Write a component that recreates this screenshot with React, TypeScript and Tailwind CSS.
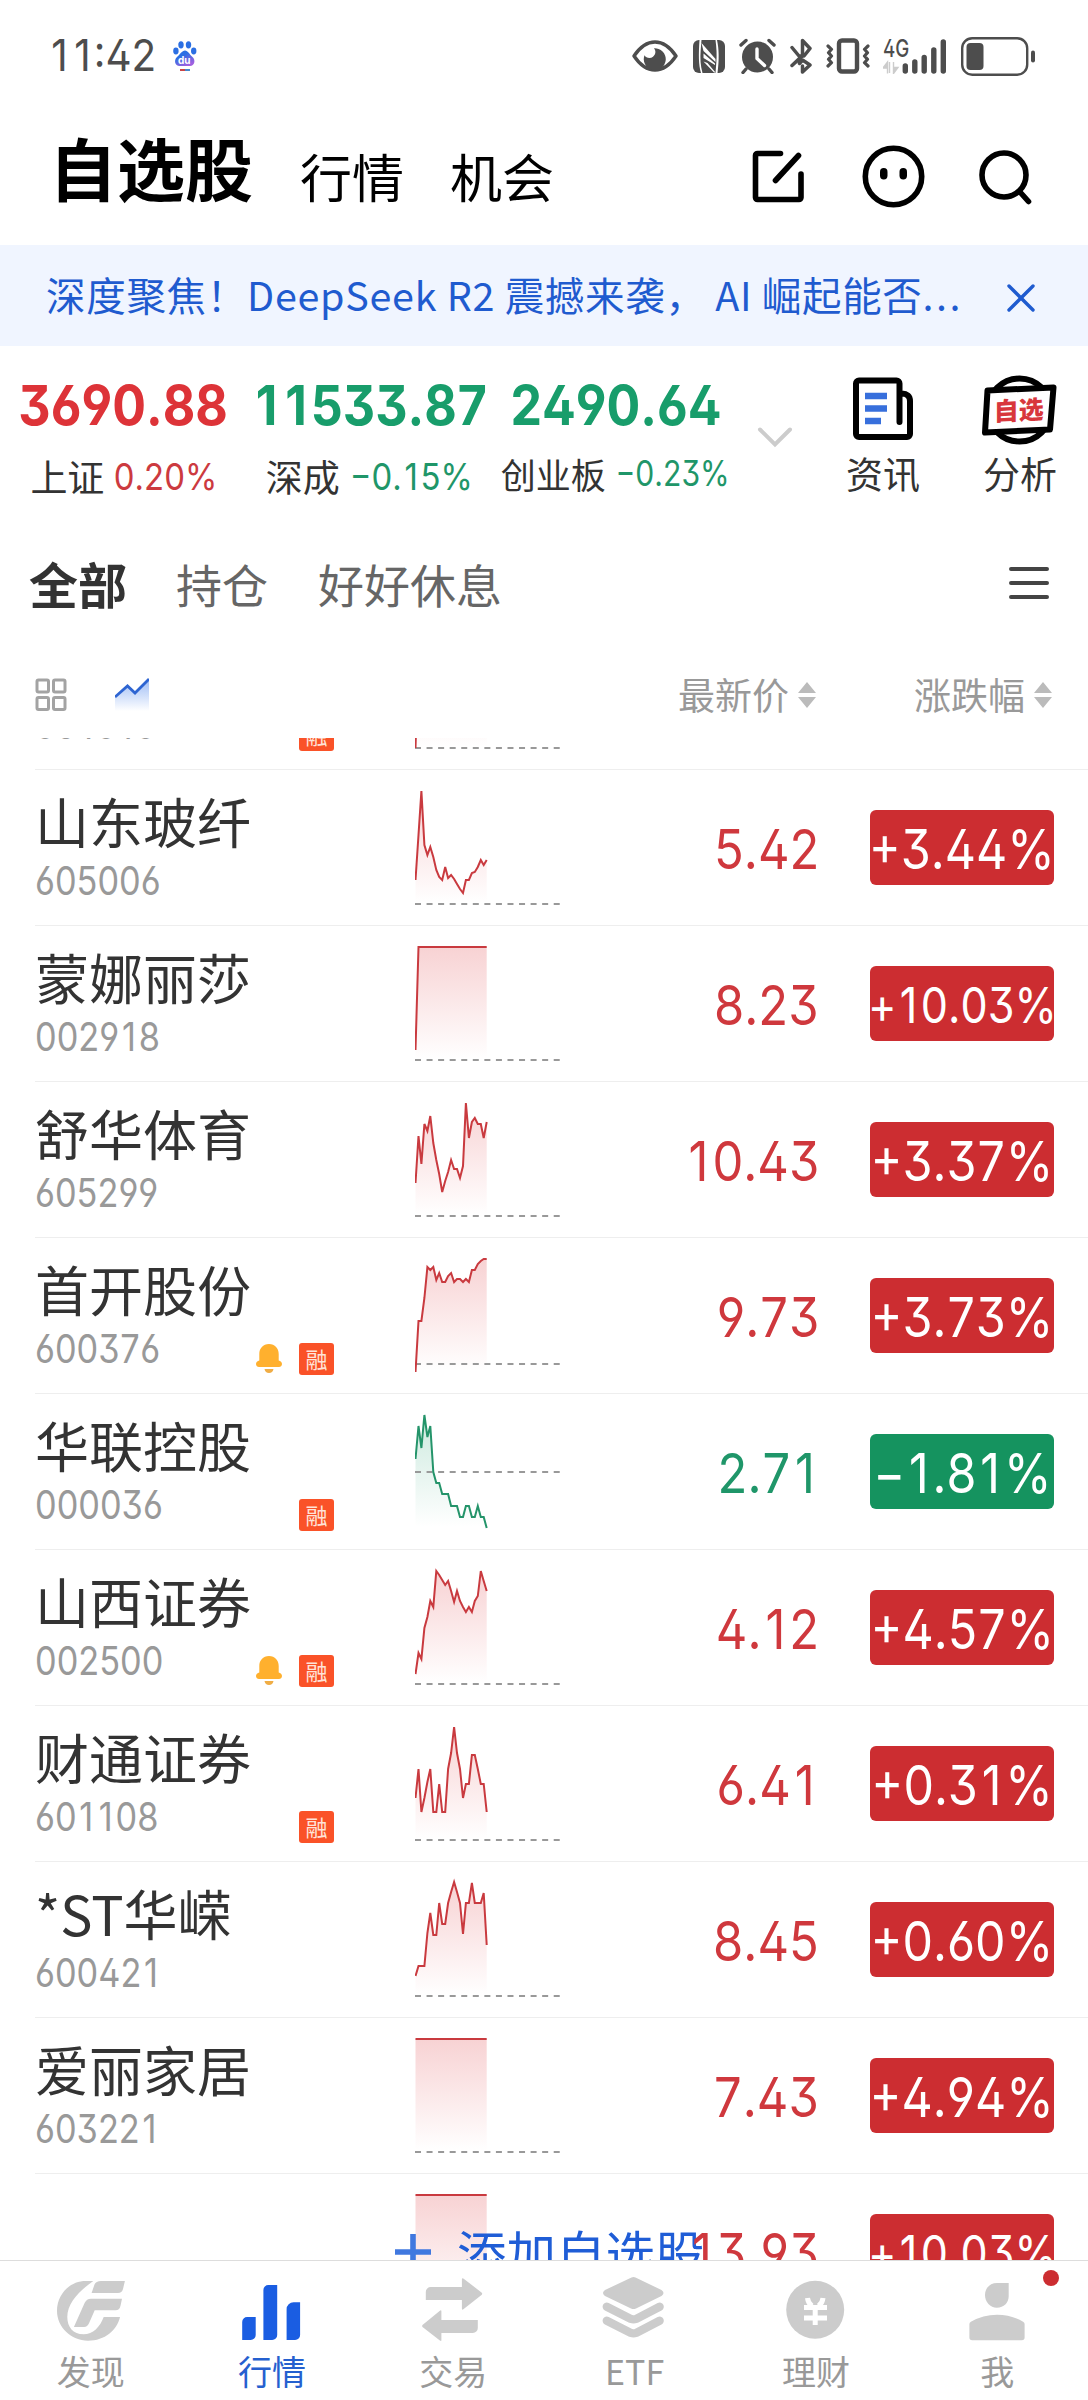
import clsx from 'clsx';
import { X } from 'lucide-react';

interface Stock {
  name?: string
  code?: string
  price?: string
  change?: string
  points: number[]
  base?: number
  bell?: boolean
  margin?: boolean
  addButton?: boolean
}

const flat = (y: number, count = 25) => Array.from({ length: count }, () => y);

const stocks: Stock[] = [
  { code: '601616', margin: true, points: [135, 40, 36, ...flat(30, 22)] },
  {
    name: '山东玻纤', code: '605006', price: '5.42', change: '+3.44%',
    points: [111, 66, 22, 76, 86, 78, 88, 101, 108, 111, 98, 109, 106, 110, 115, 120, 124, 111, 111, 104, 103, 98, 91, 96, 91],
  },
  { name: '蒙娜丽莎', code: '002918', price: '8.23', change: '+10.03%', points: [125, ...flat(22, 24)] },
  {
    name: '舒华体育', code: '605299', price: '10.43', change: '+3.37%',
    points: [102, 55, 83, 43, 50, 35, 62, 79, 93, 111, 100, 91, 79, 88, 88, 97, 85, 22, 57, 41, 37, 43, 43, 57, 41],
  },
  {
    name: '首开股份', code: '600376', price: '9.73', change: '+3.73%', bell: true, margin: true, base: 127,
    points: [135, 84, 84, 61, 30, 33, 30, 43, 36, 45, 45, 39, 36, 45, 42, 42, 45, 42, 45, 33, 33, 27, 24, 22, 22],
  },
  {
    name: '华联控股', code: '000036', price: '2.71', change: '−1.81%', margin: true, base: 79,
    points: [66, 33, 55, 22, 44, 33, 79, 90, 90, 101, 101, 101, 113, 113, 113, 124, 124, 113, 113, 124, 124, 113, 124, 124, 135],
  },
  {
    name: '山西证券', code: '002500', price: '4.12', change: '+4.57%', bell: true, margin: true,
    points: [125, 104, 110, 79, 68, 52, 58, 22, 26, 31, 36, 32, 42, 53, 42, 52, 58, 63, 58, 63, 52, 47, 22, 32, 42],
  },
  {
    name: '财通证券', code: '601108', price: '6.41', change: '+0.31%', margin: true,
    points: [93, 64, 107, 93, 77, 64, 107, 107, 79, 107, 107, 64, 48, 22, 48, 64, 93, 79, 79, 50, 50, 64, 79, 79, 107],
  },
  {
    name: '*ST华嵘', code: '600421', price: '8.45', change: '+0.60%',
    points: [115, 105, 105, 105, 72, 52, 74, 74, 42, 63, 63, 42, 31, 21, 31, 42, 73, 42, 42, 22, 42, 42, 42, 32, 84],
  },
  { name: '爱丽家居', code: '603221', price: '7.43', change: '+4.94%', points: flat(22) },
  { price: '13.93', change: '+10.03%', points: flat(22), addButton: true },
];

// "1" and "7" are padded to the width of the other digits, so that columns line up.
function Num({ className, children }: { className?: string, children: string }) {
  return (
    <span
      className={clsx(
        "inline-block whitespace-nowrap font-['Inter'] [font-feature-settings:'ss01','cv02','cv03','cv04'] [font-kerning:none]",
        className,
      )}
    >
      {children.split(/([17])/).map((part, i) =>
        i % 2 ? <span key={i} className={part === '1' ? 'px-[0.08em]' : 'px-[0.02em]'}>{part}</span> : part,
      )}
    </span>
  );
}

function StatusBar() {
  return (
    <div className="flex h-[112px] items-center pl-[48px] pr-[52px] text-[#4d4d4d]">
      <Num className="mr-[2px] w-[123px] origin-left scale-x-[0.93] text-[43.500px] leading-none">11:42</Num>
      <svg width="24" height="31" viewBox="0 0 24 31">
        <defs>
          <linearGradient id="paw" x1="0" y1="0" x2="0.6" y2="1">
            <stop offset="0.4" stopColor="#2b6fe3" />
            <stop offset="1" stopColor="#a060e0" />
          </linearGradient>
        </defs>
        <g fill="#2b6fe3">
          <ellipse cx="8" cy="3.8" rx="2.7" ry="3.6" />
          <ellipse cx="15.5" cy="3.8" rx="2.7" ry="3.6" />
          <ellipse cx="2.9" cy="10" rx="2.7" ry="3.4" />
          <ellipse cx="20.7" cy="10" rx="2.7" ry="3.4" />
        </g>
        <path d="M12 9.500c3 0 4.500 4 7.500 6.500 3.500 3 2 9-2.500 9H6.500c-4.500 0-6-6-2.500-9C7 13.500 9 9.500 12 9.500z" fill="url(#paw)" />
        <text x="5" y="22.500" fontFamily="Inter" fontWeight="700" fontSize="10" fill="#fff">du</text>
        <path d="M7 29h5" stroke="#c44" strokeWidth="2" />
        <path d="M12 29h5" stroke="#48c" strokeWidth="2" />
      </svg>
      <div className="ml-auto flex h-[40px] items-center">
        <svg className="mr-[15px]" width="46" height="32" viewBox="0 0 46 32">
          <path d="M2 16C8 7 15 2 23 2s15 5 21 14c-6 9-13 14-21 14S8 25 2 16z" fill="none" stroke="currentColor" strokeWidth="3.400" strokeLinejoin="round" />
          <path d="M22 8.200a11 11 0 1 1-9.500 7c1.500 3 6 3.500 8.500 1.500 3-2.500 3-6 1-8.500z" fill="currentColor" />
        </svg>
        <svg className="mr-[14px]" width="32" height="33" viewBox="0 0 32 33">
          <rect width="32" height="33" rx="6" fill="currentColor" />
          <g fill="#fff">
            <path d="M6.500 0h2l-.8 10C7 18 7.500 26 9.500 33H8C5.500 25 5.500 14 6.500 0zM22.500 0h1.500c2 9 2.300 19 .5 33h-2l.8-10c.7-8 .2-15-.8-23z" />
            <path d="M8.500 3l14 16v3L10.500 11zM10.500 13.500l11.500 10v1.500l-11.500-7zM10.500 21.500l4 1.500 8 9.500h-1.500z" />
          </g>
        </svg>
        <svg className="mr-[14px]" width="37" height="36" viewBox="0 0 37 36">
          <circle cx="18.500" cy="19" r="15.500" fill="currentColor" />
          <path d="M2 7l5-4.500M35 7l-5-4.500M7 31l-3 3.500M30 31l3 3.500" stroke="currentColor" strokeWidth="3.400" strokeLinecap="round" />
          <path d="M18 11v9.500l7.500 7" fill="none" stroke="#fff" strokeWidth="3.400" strokeLinecap="round" strokeLinejoin="round" />
        </svg>
        <svg className="mr-[14px]" width="22" height="36" viewBox="0 0 22 36">
          <path d="M2 9.500L9 18h5l6-7.500-7.500-8V18L2 27.500M12 18L2 27.500M9.500 25.500l3-3.500 7.500 5-7.500 7v-6" fill="none" stroke="currentColor" strokeWidth="3.500" strokeLinecap="round" strokeLinejoin="round" />
        </svg>
        <svg className="mr-[13px]" width="44" height="36" viewBox="0 0 44 36">
          <rect x="13" y="2.500" width="18" height="31" rx="3" fill="none" stroke="currentColor" strokeWidth="4.400" />
          <path d="M2 8l3.500 3.300L2.500 14.700 5.500 18 2.500 21.300l3 3.400L2 28M42 8l-3.500 3.300 3 3.400-3 3.300 3 3.300-3 3.400L42 28" fill="none" stroke="currentColor" strokeWidth="3.200" strokeLinecap="round" strokeLinejoin="round" />
        </svg>
        <div className="relative mr-[14px] h-[36px] w-[64px]">
          <Num className="absolute left-0 top-[-1px] origin-left scale-x-[0.78] text-[24px] font-medium leading-none">4G</Num>
          <svg width="64" height="36" viewBox="0 0 64 36">
            <path d="M0 30h4.500v5.500V24L0 30zM6.500 24v11M10.500 35.500V24v5.500H15l-4.500 6z" fill="#ccc" stroke="#ccc" strokeWidth="1.400" />
            <path d="M22.300 28v5M31.800 24v9M41.200 19.500V33M50.800 12v21M60.300 4v29" stroke="currentColor" strokeWidth="5.400" strokeLinecap="round" />
          </svg>
        </div>
        <svg width="75" height="39" viewBox="0 0 75 39">
          <rect x="1.200" y="1.200" width="65" height="36.500" rx="10" fill="none" stroke="currentColor" strokeWidth="2.400" />
          <rect x="5.500" y="6" width="17" height="27" rx="4" fill="currentColor" />
          <rect x="70" y="13.500" width="4" height="12" rx="2" fill="currentColor" />
        </svg>
      </div>
    </div>
  );
}

function Header() {
  return (
    <header className="flex h-[133px] items-start pl-[49px] text-black">
      <h1 className="mt-[21px] w-[251px] text-[68px] font-bold leading-[68px]">自选股</h1>
      <span className="mt-[37px] w-[150px] text-[52px] leading-[54px]">行情</span>
      <span className="mt-[37px] text-[52px] leading-[54px]">机会</span>
      <div className="ml-auto mt-[33px] flex pr-[55px]">
        <svg className="mt-[5px]" width="53" height="53" viewBox="0 0 53 53" fill="none" stroke="currentColor" strokeWidth="5.600" strokeLinecap="round" strokeLinejoin="round">
          <path d="M28.500 3.500H5.500a2 2 0 0 0-2 2v42a2 2 0 0 0 2 2H47a2 2 0 0 0 2-2V24M46.500 5.500L23.500 30.500" />
        </svg>
        <svg className="ml-[57px]" width="63" height="63" viewBox="0 0 63 63">
          <circle cx="31.500" cy="31.500" r="28.200" fill="none" stroke="currentColor" strokeWidth="5.600" />
          <rect x="18" y="23" width="7.500" height="11.500" rx="3.700" fill="currentColor" />
          <rect x="37.500" y="23" width="7.500" height="11.500" rx="3.700" fill="currentColor" />
        </svg>
        <svg className="ml-[54px] mt-[5px]" width="54" height="56" viewBox="0 0 54 56" fill="none" stroke="currentColor" strokeWidth="5.600" strokeLinecap="round">
          <circle cx="25" cy="25" r="22" />
          <path d="M41 42l8.500 9.500" />
        </svg>
      </div>
    </header>
  );
}

function Banner() {
  return (
    <div className="flex h-[101px] items-center bg-[#f0f5ff] pl-[46px] text-[#1f5bcf]">
      <p className="mb-[3px] w-[940px] whitespace-pre text-[39.500px] leading-none tracking-[0.7px]">
        深度聚焦！DeepSeek R2 震撼来袭， AI 崛起能否<span className="tracking-[2.500px]">...</span>
      </p>
      <X className="ml-[11px] mt-[4px]" size={48} strokeWidth={1.700} />
    </div>
  );
}

function Index({ className, value, label, change, up, small }: {
  className: string
  value: string
  label: string
  change: string
  up?: boolean
  small?: boolean
}) {
  return (
    <div className={clsx('flex flex-col items-center pt-[31px]', className)}>
      <Num className={clsx('scale-x-[0.91] text-[55px] font-bold leading-[56px]', up ? 'text-[#dd3338]' : 'text-[#189d6b]')}>
        {value}
      </Num>
      <div className={clsx('flex items-center whitespace-nowrap leading-none', small ? 'mt-[23px] pl-[4px] text-[35px]' : 'mt-[25px] pl-[2px] text-[37px]')}>
        <span className="text-[#333]">{label}</span>
        <Num
          className={clsx(
            'mr-[-14px] origin-left pl-[11px]',
            small ? 'scale-x-[0.86]' : 'scale-x-[0.89]',
            up ? 'text-[#cc3a3f]' : 'text-[#1f9669]',
          )}
        >
          {change}
        </Num>
      </div>
    </div>
  );
}

function Indices() {
  return (
    <section className="flex h-[180px]">
      <Index className="ml-[12px] w-[222px]" value="3690.88" label="上证" change="0.20%" up />
      <Index className="w-[271px]" value="11533.87" label="深成" change="−0.15%" />
      <Index className="w-[222px]" value="2490.64" label="创业板" change="−0.23%" small />
      <svg className="ml-[30px] mt-[80px]" width="36" height="24" viewBox="0 0 36 24" fill="none" stroke="#ccc" strokeWidth="4" strokeLinecap="round">
        <path d="M3 3.500l15 15 15-15" />
      </svg>
      <div className="ml-[53px] flex w-[74px] flex-col items-center pt-[31px] text-[37px] leading-none text-[#333]">
        <svg width="60" height="65" viewBox="0 0 60 65">
          <path d="M46.500 45V6.500a3 3 0 0 0-3-3H6a3 3 0 0 0-3 3V57a3 3 0 0 0 3 3h48a3 3 0 0 0 3-3V24c0-5-3-7.500-8-7.500" fill="none" stroke="#000" strokeWidth="6" strokeLinecap="round" />
          <path d="M12 19h22M12 31.500h22M12 44h16" stroke="#376fdc" strokeWidth="6.400" />
        </svg>
        <span className="mt-[13px]">资讯</span>
      </div>
      <div className="ml-[60px] flex w-[80px] flex-col items-center pt-[29px] text-[37px] leading-none text-[#333]">
        <svg width="76" height="70" viewBox="0 0 76 70">
          <circle cx="37.500" cy="35" r="31.500" fill="none" stroke="#000" strokeWidth="6" />
          <path d="M5.500 15.500L71.500 12.500 68 54.500 3 57.500z" fill="#fff" stroke="#000" strokeWidth="6" strokeLinejoin="round" />
          <text x="13.500" y="44.500" fontFamily="Noto Sans CJK SC" fontWeight="900" fontSize="25" fill="#d8373c" transform="rotate(-3 37 35) skewX(-3)">自选</text>
        </svg>
        <span className="mt-[10px]">分析</span>
      </div>
    </section>
  );
}

function GroupTabs() {
  return (
    <nav className="flex h-[114px] items-center pb-[1px] pl-[29px] pr-[39px] text-[46px] leading-none text-[#666]">
      <span className="w-[147px] text-[49px] font-bold text-[#333]">全部</span>
      <span className="w-[142px]">持仓</span>
      <span>好好休息</span>
      <svg className="ml-auto" width="40" height="32" viewBox="0 0 40 32" stroke="#444" strokeWidth="4" strokeLinecap="round">
        <path d="M2 2h36M2 16h36M2 30h36" />
      </svg>
    </nav>
  );
}

function SortLabel({ className, children }: { className: string, children: string }) {
  return (
    <span className={clsx('flex items-center', className)}>
      {children}
      <svg className="ml-[9px]" width="18" height="26" viewBox="0 0 18 26" fill="#bbb">
        <path d="M9 0l9 11H0zM9 26l9-11H0z" />
      </svg>
    </span>
  );
}

function ListHeader() {
  return (
    <div className="flex h-[98px] items-center pl-[35px] pt-[11px] text-[37px] leading-none text-[#999]">
      <svg width="32" height="33" viewBox="0 0 32 33" fill="none" stroke="#a3a3a3" strokeWidth="3">
        <rect x="2" y="2" width="11.500" height="12" rx="1.500" />
        <rect x="18.500" y="2" width="11.500" height="12" rx="1.500" />
        <rect x="2" y="19.500" width="11.500" height="12" rx="1.500" />
        <rect x="18.500" y="19.500" width="11.500" height="12" rx="1.500" />
      </svg>
      <svg className="ml-[48px]" width="34" height="34" viewBox="0 0 34 34">
        <defs>
          <linearGradient id="trend" x1="0" y1="0" x2="0" y2="1">
            <stop stopColor="#9dbcf5" />
            <stop offset="1" stopColor="#fff" />
          </linearGradient>
        </defs>
        <path d="M0 19L12.500 8l7.500 7L34 1v32H0z" fill="url(#trend)" />
        <path d="M0 19L12.500 8l7.500 7L34 1" fill="none" stroke="#2e65d2" strokeWidth="2.800" />
      </svg>
      <SortLabel className="ml-[529px]">最新价</SortLabel>
      <SortLabel className="ml-[98px]">涨跌幅</SortLabel>
    </div>
  );
}

function Sparkline({ points, base = 135, down }: { points: number[], base?: number, down: boolean }) {
  const line = points.map((y, i) => `${(i * 2.967 + 0.5).toFixed(1)},${y}`).join(' ');
  const id = down ? 'fill-down' : 'fill-up';

  return (
    <svg className="absolute left-[380px] top-[-1px]" width="146" height="155" viewBox="0 0 146 155">
      <defs>
        <linearGradient id={id} gradientUnits="userSpaceOnUse" x1="0" y1="22" x2="0" y2="134">
          <stop stopColor={down ? '#189d6b' : '#dd3338'} stopOpacity="0.22" />
          <stop offset="1" stopColor={down ? '#189d6b' : '#dd3338'} stopOpacity="0" />
        </linearGradient>
      </defs>
      <polygon points={`0.5,135 ${line} 71.7,135`} fill={`url(#${id})`} />
      <path d={`M0 ${base}h146`} stroke="#999" strokeWidth="2" strokeDasharray="6 5.560" />
      <polyline points={line} fill="none" stroke={down ? '#24946a' : '#c93a3f'} strokeWidth="2" />
    </svg>
  );
}

function StockRow({ stock }: { stock: Stock }) {
  const { name, code, price, change } = stock;
  const down = !!change?.startsWith('−');
  const long = !!change && change.length > 6;

  return (
    <li className="relative ml-[35px] flex h-[156px] shrink-0 border-t border-[#eee]">
      <div className="w-[221px] whitespace-nowrap pt-[24px]">
        <p className="h-[54px] text-[54px] leading-[54px] text-[#333]">{name}</p>
        {code && (
          <Num className="mt-[13px] origin-left scale-x-[0.88] text-[39px] leading-[40px] text-[#999]">{code}</Num>
        )}
      </div>
      <div className="flex w-[78px] items-start justify-end pt-[105px]">
        {stock.bell && (
          <svg className="mr-[17px] mt-[1px] shrink-0" width="26" height="30" viewBox="0 0 26 30" fill="#ffb02e">
            <path d="M13 0c6 0 9.700 4.500 9.700 10v6.500c1.800.5 3.300 1.500 3.300 3.500 0 2-1.500 3-3 3H3c-1.500 0-3-1-3-3s1.500-3 3.300-3.500V10C3.300 4.500 7 0 13 0z" />
            <path d="M8.500 25h9c-.5 2.500-2 4-4.500 4s-4-1.500-4.500-4z" fill="#f0ad45" />
          </svg>
        )}
        {stock.margin && (
          <span className="flex h-[32px] w-[35px] shrink-0 items-center justify-center rounded-[3px] bg-[#fa5228] pb-[2px] text-[22px] leading-none text-[#ffe3d8]">融</span>
        )}
      </div>
      <Sparkline points={stock.points} base={stock.base} down={down} />
      {stock.addButton && (
        <span className="absolute left-[360px] top-[53px] flex items-center whitespace-nowrap text-[49.500px] leading-none text-[#1f5dd6]">
          <svg className="mr-[26px]" width="36" height="36" viewBox="0 0 36 36" stroke="#4078df" strokeWidth="5.600">
            <path d="M0 18h36M18 0v36" />
          </svg>
          添加自选股
        </span>
      )}
      {price && (
        <div className="relative flex w-[485px] justify-end pt-[49px]">
          <Num className={clsx('origin-right scale-x-[0.89] text-[55px] leading-[60px]', down ? 'text-[#1f9669]' : 'text-[#cf383d]')}>
            {price}
          </Num>
        </div>
      )}
      {change && (
        <div
          className={clsx(
            'ml-[51px] mt-[40px] flex h-[75px] w-[184px] items-center justify-center rounded-[6px] text-white',
            down ? 'bg-[#15935f]' : 'bg-[#cc2d31]',
          )}
        >
          <Num className={clsx('mt-[3px] leading-none', long ? 'scale-x-[0.88] text-[49px]' : 'scale-x-[0.88] text-[55px]')}>
            {change}
          </Num>
        </div>
      )}
    </li>
  );
}

const tabs = [
  {
    label: '发现',
    icon: (
      <>
        <path d="M42.300 11H35C18 11 6 25 6 41s14 29.700 31 29.700S66 60 69 47H52.700C49 57 42 64.300 32.600 64.300 22 64.300 16.300 57 16.300 47c0-14 11.700-26 26-36z" />
        <path d="M50 11h23.900L72 19q-1 4-5 4H40.600l2.900-8.500Q45 11 50 11zM40 28.700h31l-1.500 7q-1 4.600-5 4.600H43.700l-5.700 13Q36.500 57 33 57H22.900l10.700-24q2-4.300 6.400-4.300z" />
      </>
    ),
  },
  {
    label: '行情',
    icon: <path d="M15.200 47h8.500v18a5 5 0 0 1-5 5h-8.500V52a5 5 0 0 1 5-5zM36.400 15h8.800v50a5 5 0 0 1-5 5h-8.800V20a5 5 0 0 1 5-5zM61.600 32.300h6.500V65a5 5 0 0 1-5 5h-8.500V39.300a7 7 0 0 1 7-7z" />,
  },
  {
    label: '交易',
    icon: (
      <>
        <path d="M17.800 17h31.100V9.500q0-2 1.800-.8l18.100 14q.8 1 0 2L50.700 39q-1.800 1.500-1.800-.5V30H12.800v-8a5 5 0 0 1 5-5z" />
        <path d="M64.800 50H28.400v-8.500q0-2-1.500-.8L9.500 55q-.9 1 0 2l17.400 13.500q1.500 1.200 1.500-.5V63h31.400a5 5 0 0 0 5-5z" />
      </>
    ),
  },
  {
    label: 'ETF',
    icon: (
      <>
        <path d="M36.500 7.500q2-1 4 0L66.500 20q4 3 0 6L41 38.500q-2.500 1-5 0L10 26q-4-3 0-6z" />
        <path d="M11.800 36.700l24 12.200q2.700 1 5.400 0l23.400-12.200M11.800 50.700l24 12.200q2.700 1 5.400 0l23.400-12.200" fill="none" stroke="currentColor" strokeWidth="8.400" strokeLinecap="round" />
      </>
    ),
  },
  {
    label: '理财',
    icon: (
      <>
        <circle cx="39.200" cy="39.800" r="29" />
        <path d="M31.500 28q.5 5 4.500 8M47 28q-.5 5-4.500 8M28 37.500h23M28 48h23M39.200 35v20" fill="none" stroke="#fff" strokeWidth="5" />
      </>
    ),
  },
  {
    label: '我',
    icon: (
      <>
        <path d="M51.700 13v13c0 7-5 11.700-11.800 11.700S28 32 28 25s5-12 12-12z" />
        <path d="M12.400 54q0-1.500 1.500-2.300Q26 44.700 40 44.700t26.100 7q1.500.8 1.500 2.300v13.500q0 2.800-2.800 2.800H15.200q-2.800 0-2.800-2.800z" />
      </>
    ),
    dot: true,
  },
];

function TabBar() {
  return (
    <nav className="grid h-[140px] grid-cols-6 border-t border-[#ddd] bg-white">
      {tabs.map(({ label, icon, dot }, index) => (
        <div
          key={label}
          className={clsx('relative flex flex-col items-center pt-[9px]', index === 1 ? 'text-[#1a5de2]' : 'text-[#ccc]')}
        >
          <svg width="80" height="76" viewBox="0 0 80 76" fill="currentColor">{icon}</svg>
          <span className={clsx('mt-[7px] text-[34px] leading-[36px]', index === 1 ? 'text-[#2560cf]' : 'text-[#999]')}>{label}</span>
          {dot && <i className="absolute right-[29px] top-[9px] size-[16px] rounded-full bg-[#cc2d31]" />}
        </div>
      ))}
    </nav>
  );
}

export default function App() {
  return (
    <div className="flex h-[2400px] w-[1088px] flex-col overflow-hidden bg-white font-['Noto_Sans_CJK_SC',sans-serif]">
      <StatusBar />
      <Header />
      <Banner />
      <Indices />
      <GroupTabs />
      <ListHeader />
      <ul className="flex h-[1522px] flex-col overflow-hidden [&>li:first-child]:mt-[-125px]">
        {stocks.map((stock, index) => <StockRow key={index} stock={stock} />)}
      </ul>
      <TabBar />
    </div>
  );
}
